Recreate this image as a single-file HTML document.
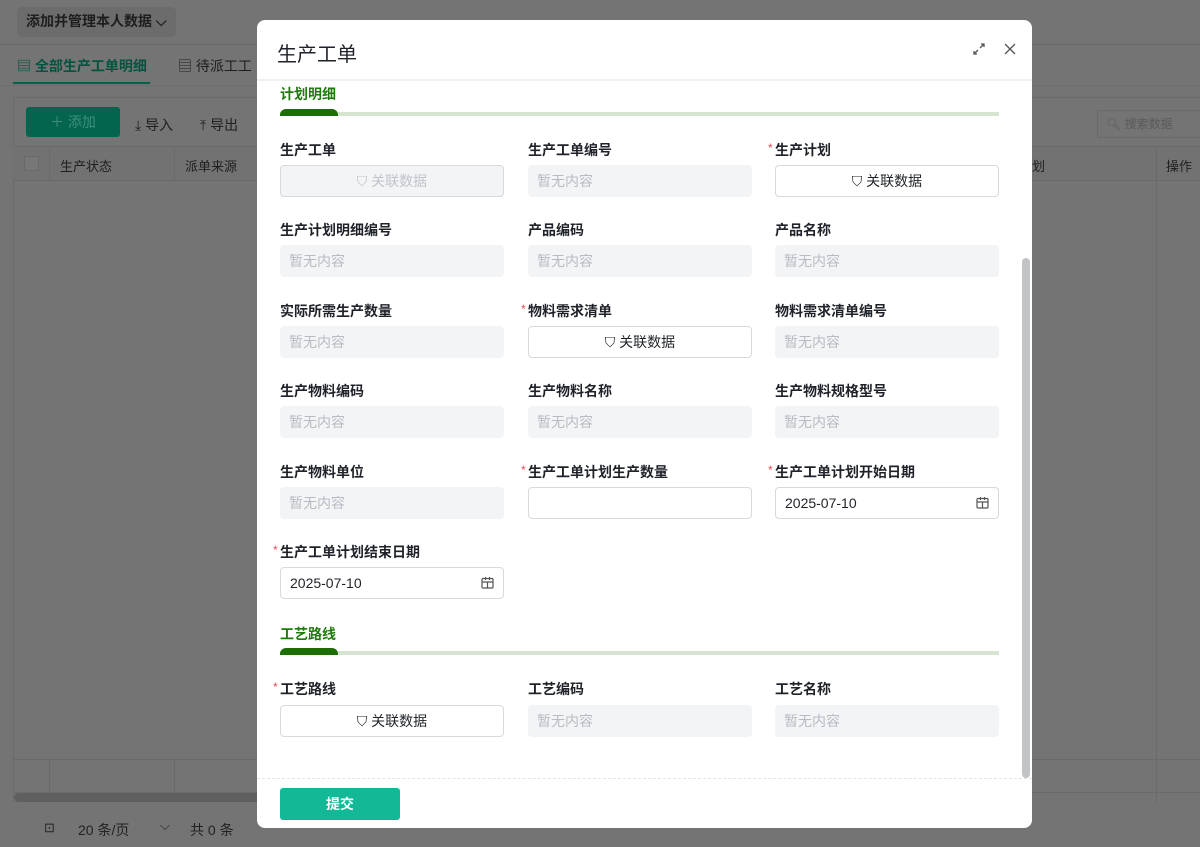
<!DOCTYPE html>
<html><head><meta charset="utf-8"><style>
*{box-sizing:border-box;margin:0;padding:0}
body{width:1200px;height:847px;overflow:hidden;background:#747474;font-family:"Liberation Sans","Noto Sans CJK SC",sans-serif;position:relative;font-size:14px}
.a{position:absolute}
.bgt{color:#1f1f1f}
.modal{position:absolute;left:257px;top:20px;width:775px;height:808px;background:#fff;border-radius:8px;overflow:hidden}
.lab{position:absolute;font-size:14px;font-weight:bold;color:#1f2329;height:20px;line-height:20px;white-space:nowrap}
.lab i{color:#e34d59;font-style:normal;font-weight:normal;font-size:12px;position:absolute;left:-7px;top:-2px}
.inp{position:absolute;width:224px;height:32px;border-radius:4px;font-size:14px;line-height:30px}
.empty{background:#f3f4f6;color:#b7bbc2;padding-left:9px;line-height:32px}
.box{border:1px solid #d6d9de;background:#fff}
.rel{border:1px solid #d6d9de;text-align:center;color:#1f2329}
.rel.dis{background:#f3f4f6;color:#bfc3c9}
.date{border:1px solid #d6d9de;padding-left:9px;color:#1f2329}
.cal{position:absolute;right:9px;top:8px}
.sect{position:absolute;left:23px;font-size:14px;font-weight:bold;color:#1e7a0c}
.bar{position:absolute;left:23px;width:719px;height:4px;background:#d5e5d0}
.bar b{position:absolute;left:0;top:-3px;width:58px;height:7px;background:#1b6e06;border-radius:6px 6px 0 0}
</style></head><body>
<!-- background page -->
<div class="a" style="left:17px;top:7px;width:159px;height:30px;background:#6c6c6c;border-radius:5px"></div>
<div class="a bgt" style="left:26px;top:11px;font-size:14px;font-weight:bold;color:#1e1e1e">添加并管理本人数据 ⌵</div>
<div class="a" style="left:0;top:44px;width:1200px;height:1px;background:#6a6a6a"></div>
<div class="a" style="left:17px;top:56px;font-size:14px;font-weight:bold;color:#05533f">▤ 全部生产工单明细</div>
<div class="a" style="left:13px;top:82px;width:137px;height:2px;background:#05634d"></div>
<div class="a" style="left:178px;top:56px;font-size:14px;color:#1e1e1e">▤ 待派工工</div>
<div class="a" style="left:0;top:85px;width:1200px;height:1px;background:#6d6d6d"></div>
<div class="a" style="left:13px;top:97px;width:1187px;height:705px;border-left:1px solid #6a6a6a;border-top:1px solid #6a6a6a"></div>
<div class="a" style="left:26px;top:107px;width:94px;height:30px;background:#03654e;border-radius:3px;color:#3f8f7b;line-height:30px;text-align:center;font-size:14px">＋ 添加</div>
<div class="a" style="left:135px;top:115px;color:#1f1f1f;font-size:14px">⤓ 导入</div>
<div class="a" style="left:200px;top:115px;color:#1f1f1f;font-size:14px">⤒ 导出</div>
<div class="a" style="left:1097px;top:110px;width:110px;height:28px;border:1px solid #696969;border-radius:4px;color:#5a5a5a;font-size:12px;line-height:26px;padding-left:8px">🔍︎ 搜索数据</div>
<div class="a" style="left:13px;top:146px;width:1187px;height:35px;border-top:1px solid #6a6a6a;border-bottom:1px solid #6a6a6a;background:#727272"></div>
<div class="a" style="left:24px;top:156px;width:15px;height:15px;border:1px solid #6a6a6a;background:#777"></div>
<div class="a" style="left:49px;top:146px;width:1px;height:35px;background:#6a6a6a"></div>
<div class="a" style="left:60px;top:156px;color:#202020;font-size:13px">生产状态</div>
<div class="a" style="left:174px;top:146px;width:1px;height:35px;background:#6a6a6a"></div>
<div class="a" style="left:185px;top:156px;color:#202020;font-size:13px">派单来源</div>
<div class="a" style="left:1032px;top:156px;color:#202020;font-size:13px">划</div>
<div class="a" style="left:1156px;top:146px;width:1px;height:656px;background:#6a6a6a"></div>
<div class="a" style="left:1166px;top:156px;color:#202020;font-size:13px">操作</div>
<div class="a" style="left:13px;top:759px;width:1187px;height:1px;background:#6a6a6a"></div>
<div class="a" style="left:13px;top:792px;width:1187px;height:1px;background:#6a6a6a"></div>
<div class="a" style="left:49px;top:759px;width:1px;height:33px;background:#6a6a6a"></div>
<div class="a" style="left:174px;top:759px;width:1px;height:33px;background:#6a6a6a"></div>
<div class="a" style="left:14px;top:793px;width:250px;height:9px;background:#5f5f5f;border-radius:5px"></div>
<div class="a" style="left:44px;top:820px;color:#222;font-size:13px">⊡</div>
<div class="a" style="left:78px;top:820px;color:#222;font-size:14px">20 条/页</div>
<div class="a" style="left:160px;top:818px;color:#222;font-size:13px">⌵</div>
<div class="a" style="left:190px;top:820px;color:#222;font-size:14px">共 0 条</div>

<div class="modal">
  <div class="a" style="left:20px;top:18px;font-size:20px;color:#1f2329">生产工单</div>
  <svg class="a" style="left:715px;top:22px" width="14" height="14" viewBox="0 0 14 14" fill="none" stroke="#555" stroke-width="1.3"><path d="M8 6l4-4M9 2h3v3M6 8l-4 4M2 9v3h3"/></svg>
  <svg class="a" style="left:747px;top:23px" width="12" height="12" viewBox="0 0 12 12" stroke="#555" stroke-width="1.3"><path d="M1 1l10 10M11 1L1 11"/></svg>
  <div class="a" style="left:0;top:59px;width:775px;height:2px;background:#eff0f2"></div>

  <div class="sect" style="top:64px">计划明细</div>
  <div class="bar" style="top:92px"><b></b></div>

  <!-- row1 top 121 -->
  <div class="lab" style="left:23px;top:120px">生产工单</div>
  <div class="inp rel dis" style="left:23px;top:145px">⛉ 关联数据</div>
  <div class="lab" style="left:271px;top:120px">生产工单编号</div>
  <div class="inp empty" style="left:271px;top:145px">暂无内容</div>
  <div class="lab" style="left:518px;top:120px"><i>*</i>生产计划</div>
  <div class="inp rel" style="left:518px;top:145px">⛉ 关联数据</div>
  <!-- row2 -->
  <div class="lab" style="left:23px;top:200px">生产计划明细编号</div>
  <div class="inp empty" style="left:23px;top:225px">暂无内容</div>
  <div class="lab" style="left:271px;top:200px">产品编码</div>
  <div class="inp empty" style="left:271px;top:225px">暂无内容</div>
  <div class="lab" style="left:518px;top:200px">产品名称</div>
  <div class="inp empty" style="left:518px;top:225px">暂无内容</div>
  <!-- row3 -->
  <div class="lab" style="left:23px;top:281px">实际所需生产数量</div>
  <div class="inp empty" style="left:23px;top:306px">暂无内容</div>
  <div class="lab" style="left:271px;top:281px"><i>*</i>物料需求清单</div>
  <div class="inp rel" style="left:271px;top:306px">⛉ 关联数据</div>
  <div class="lab" style="left:518px;top:281px">物料需求清单编号</div>
  <div class="inp empty" style="left:518px;top:306px">暂无内容</div>
  <!-- row4 -->
  <div class="lab" style="left:23px;top:361px">生产物料编码</div>
  <div class="inp empty" style="left:23px;top:386px">暂无内容</div>
  <div class="lab" style="left:271px;top:361px">生产物料名称</div>
  <div class="inp empty" style="left:271px;top:386px">暂无内容</div>
  <div class="lab" style="left:518px;top:361px">生产物料规格型号</div>
  <div class="inp empty" style="left:518px;top:386px">暂无内容</div>
  <!-- row5 -->
  <div class="lab" style="left:23px;top:442px">生产物料单位</div>
  <div class="inp empty" style="left:23px;top:467px">暂无内容</div>
  <div class="lab" style="left:271px;top:442px"><i>*</i>生产工单计划生产数量</div>
  <div class="inp box" style="left:271px;top:467px"></div>
  <div class="lab" style="left:518px;top:442px"><i>*</i>生产工单计划开始日期</div>
  <div class="inp date" style="left:518px;top:467px">2025-07-10<svg class="cal" width="13" height="13" viewBox="0 0 13 13" fill="none" stroke="#555" stroke-width="1.2"><rect x="1" y="2.5" width="11" height="9.5" rx="1"/><path d="M1 6h11M4.5 1v3M8.5 1v3M6.5 6v6"/></svg></div>
  <!-- row6 -->
  <div class="lab" style="left:23px;top:522px"><i>*</i>生产工单计划结束日期</div>
  <div class="inp date" style="left:23px;top:547px">2025-07-10<svg class="cal" width="13" height="13" viewBox="0 0 13 13" fill="none" stroke="#555" stroke-width="1.2"><rect x="1" y="2.5" width="11" height="9.5" rx="1"/><path d="M1 6h11M4.5 1v3M8.5 1v3M6.5 6v6"/></svg></div>

  <div class="sect" style="top:604px">工艺路线</div>
  <div class="bar" style="top:631px"><b></b></div>
  <div class="lab" style="left:23px;top:659px"><i>*</i>工艺路线</div>
  <div class="inp rel" style="left:23px;top:685px">⛉ 关联数据</div>
  <div class="lab" style="left:271px;top:659px">工艺编码</div>
  <div class="inp empty" style="left:271px;top:685px">暂无内容</div>
  <div class="lab" style="left:518px;top:659px">工艺名称</div>
  <div class="inp empty" style="left:518px;top:685px">暂无内容</div>

  <div class="a" style="left:765px;top:238px;width:8px;height:520px;background:#c1c3c7;border-radius:4px"></div>
  <div class="a" style="left:0;top:758px;width:775px;border-top:1px dashed #e3e5e8"></div>
  <div class="a" style="left:23px;top:768px;width:120px;height:32px;background:#13b896;border-radius:3px;color:#fff;font-weight:bold;text-align:center;line-height:32px;font-size:14px">提交</div>
</div>
</body></html>
